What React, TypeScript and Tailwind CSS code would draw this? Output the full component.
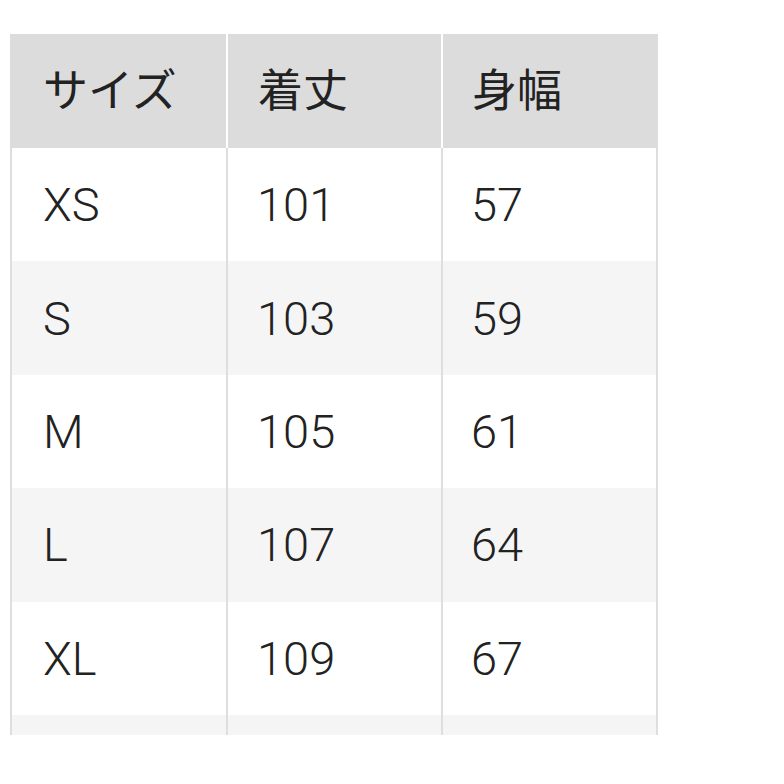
const rows: [string, string, string][] = [
  ['XS', '101', '57'],
  ['S', '103', '59'],
  ['M', '105', '61'],
  ['L', '107', '64'],
  ['XL', '109', '67'],
  ['', '', ''],
];

const font = { fontFamily: 'Roboto, "Noto Sans CJK JP", sans-serif' };

export default function App() {
  return (
    <div className="w-[784px] h-[784px] bg-white overflow-hidden" style={font}>
      <div className="ml-[10px] mt-[34px] w-[648px] h-[701px] overflow-hidden text-[47px] leading-none text-[#222] font-light">
        {/* header */}
        <div className="flex gap-[2px] h-[114px] text-[45px] font-normal">
          {['サイズ', '着丈', '身幅'].map((h, i) => (
            <div
              key={h}
              className={`${i === 0 ? 'w-[216px] pl-[33px]' : i === 1 ? 'w-[213px] pl-[30px]' : 'w-[215px] pl-[29px]'} bg-[#dcdcdc] flex items-center`}
            >
              {h}
            </div>
          ))}
        </div>

        {/* body */}
        {rows.map((r, ri) => (
          <div
            key={ri}
            className={`flex h-[113.4px] ${ri % 2 === 1 ? 'bg-[#f5f5f5]' : 'bg-white'}`}
          >
            <div className="w-[216px] border-l-2 border-[#dedede] pl-[31px] flex items-center">{r[0]}</div>
            <div className="w-[215px] border-l-2 border-[#dedede] pl-[29px] flex items-center">{r[1]}</div>
            <div className="w-[217px] border-x-2 border-[#dedede] pl-[28px] flex items-center">{r[2]}</div>
          </div>
        ))}
      </div>
    </div>
  );
}
